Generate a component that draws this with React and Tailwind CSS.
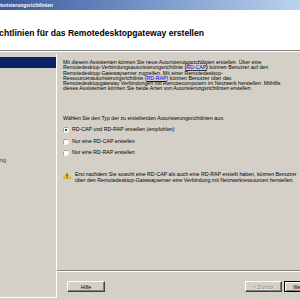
import React from "react";

function Radio({ checked }) {
  return (
    <svg width="6" height="6" viewBox="0 0 12 12" className="shrink-0">
      <path d="M10.2 1.8A6 6 0 0 0 1.8 10.2" fill="none" stroke="#808080" strokeWidth="1.6" />
      <path d="M1.8 10.2A6 6 0 0 0 10.2 1.8" fill="none" stroke="#ffffff" strokeWidth="1.6" />
      <circle cx="6" cy="6" r="4.6" fill="#ffffff" />
      {checked && <circle cx="6" cy="6" r="2" fill="#000000" />}
    </svg>
  );
}

function Warn() {
  return (
    <svg width="8" height="7" viewBox="0 0 16 14" className="shrink-0">
      <path d="M8 0.8 L15.3 13.3 L0.7 13.3 Z" fill="#f7d330" stroke="#b08a10" strokeWidth="1" strokeLinejoin="round" />
      <rect x="7.1" y="4.2" width="1.8" height="5" fill="#000" />
      <rect x="7.1" y="10.3" width="1.8" height="1.8" fill="#000" />
    </svg>
  );
}

function Link({ children, focus }) {
  return (
    <span className={"text-[#0000ee] underline " + (focus ? "outline-dotted outline-1 outline-[#555]" : "")}>
      {children}
    </span>
  );
}

export default function App() {
  return (
    <div className="w-[300px] h-[300px] overflow-hidden bg-[#d4d0c8] flex flex-col font-['Liberation_Sans',Arial,sans-serif] text-black">
      {/* title bar */}
      <div className="h-[10px] shrink-0 bg-linear-to-r from-[#3a5aa0] to-[#bcd3ef] flex items-center">
        <div className="w-[53px] overflow-hidden flex justify-end">
          <span className="whitespace-nowrap text-white text-[5px] font-bold leading-[6px]">
            Neue Autorisierungsrichtlinien
          </span>
        </div>
      </div>
      {/* header */}
      <div className="h-[40px] shrink-0 bg-white">
        <div className="w-[204px] mt-[18px] overflow-hidden flex justify-end">
          <span className="whitespace-nowrap text-[8.6px] font-bold leading-[10px] text-black">
            Neue Autorisierungsrichtlinien für das Remotedesktopgateway erstellen
          </span>
        </div>
      </div>
      <div className="h-[2px] shrink-0 border-t border-[#808080] border-b border-b-white" />
      {/* body */}
      <div className="flex-1 flex pt-[2px]">
        {/* left pane */}
        <div className="w-[57px] h-[244px] shrink-0 border-r border-b border-white flex flex-col pt-[3px]">
          <div className="h-[11px] bg-[#0a246a]" />
          <div className="mt-[89px] text-[5.25px] leading-[6px] text-[#333] whitespace-nowrap">ng</div>
        </div>
        {/* right pane */}
        <div className="flex-1 min-w-0 overflow-hidden flex flex-col">
          <div className="pl-[6px] pt-[6px] text-[5.25px] leading-[5.3px] whitespace-nowrap">
            <div>Mit diesem Assistenten können Sie neue Autorisierungsrichtlinien erstellen. Über eine</div>
            <div>
              Remotedesktop-Verbindungsautorisierungsrichtlinie (<Link focus>RD-CAP</Link>) können Benutzer auf den
            </div>
            <div>Remotedesktop-Gatewayserver zugreifen. Mit einer Remotedesktop-</div>
            <div>
              Ressourcenautorisierungsrichtlinie (<Link>RD-RAP</Link>) können Benutzer über das
            </div>
            <div>Remotedesktopgateway Verbindungen mit Remotecomputern im Netzwerk herstellen. Mithilfe</div>
            <div>dieses Assistenten können Sie beide Arten von Autorisierungsrichtlinien erstellen.</div>

            <div className="mt-[24.7px]">Wählen Sie den Typ der zu erstellenden Autorisierungsrichtlinien aus:</div>

            <div className="mt-[2.6px] flex flex-col">
              <div className="h-[11.5px] flex items-center gap-[3px]">
                <Radio checked />
                <span>RD-CAP und RD-RAP erstellen (empfohlen)</span>
              </div>
              <div className="h-[11.5px] flex items-center gap-[3px]">
                <Radio />
                <span>Nur eine RD-CAP erstellen</span>
              </div>
              <div className="h-[11.5px] flex items-center gap-[3px]">
                <Radio />
                <span>Nur eine RD-RAP erstellen</span>
              </div>
            </div>

            <div className="mt-[11.7px] flex items-start gap-[4px] leading-[6px]">
              <div className="pt-[1px]">
                <Warn />
              </div>
              <div>
                <div>Erst nachdem Sie sowohl eine RD-CAP als auch eine RD-RAP erstellt haben, können Benutzer</div>
                <div>über den Remotedesktop-Gatewayserver eine Verbindung mit Netzwerkressourcen herstellen.</div>
              </div>
            </div>
          </div>
          <div className="flex-1" />
          <div className="h-[2px] shrink-0 border-t border-[#808080] border-b border-b-white" />
          <div className="h-[9px] shrink-0" />
          <div className="flex pl-[10px] text-[5.25px] leading-[6px]">
            <div className="w-[38px] h-[11px] shrink-0 flex items-center justify-center border border-t-white border-l-white border-r-[#404040] border-b-[#404040] shadow-[inset_-1px_-1px_0_#808080]">
              Hilfe
            </div>
            <div className="ml-[140px] w-[37px] h-[11px] shrink-0 flex items-center justify-center border border-t-white border-l-white border-r-[#404040] border-b-[#404040] shadow-[inset_-1px_-1px_0_#808080] text-[#808080] [text-shadow:1px_1px_0_#fff]">
              &lt; Zurück
            </div>
            <div className="ml-[2px] w-[38px] h-[11px] shrink-0 flex items-center justify-center border border-black shadow-[inset_1px_1px_0_#fff,inset_-1px_-1px_0_#808080]">
              Weiter &gt;
            </div>
          </div>
          <div className="h-[8px] shrink-0" />
        </div>
      </div>
    </div>
  );
}
